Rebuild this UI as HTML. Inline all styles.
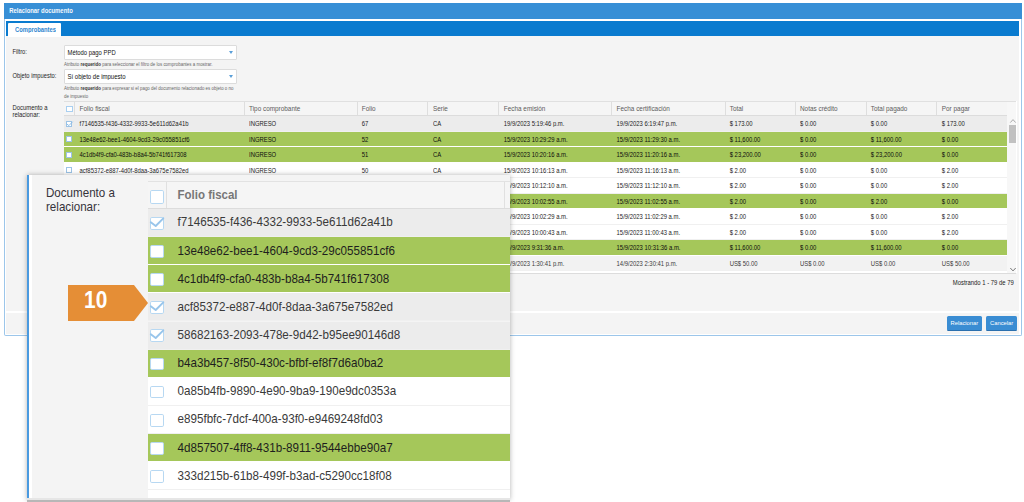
<!DOCTYPE html><html><head><meta charset="utf-8"><style>

*{box-sizing:border-box;margin:0;padding:0}
html,body{width:1024px;height:502px;overflow:hidden;background:#fff;font-family:"Liberation Sans", sans-serif;}
.a{position:absolute}
.t{position:absolute;white-space:nowrap;line-height:1;}

</style></head><body>
<div class="a" style="left:3.8px;top:3px;width:1018.6px;height:332.8px;background:#fff;border:1.4px solid #9cc6ea;border-top:none;border-radius:0 0 2px 2px"></div>
<div class="a" style="left:4px;top:3px;width:1018px;height:15.7px;background:#378fd6"></div>
<div class="t" style="left:9.3px;top:8.2px;font-size:5.9px;font-weight:bold;color:#f4f8fc;transform:scaleY(1.15);transform-origin:0 0">Relacionar documento</div>
<div class="a" style="left:6px;top:21px;width:1013px;height:15px;background:#0a7bcf"></div>
<div class="a" style="left:6px;top:36px;width:1013px;height:274.5px;background:#f4f4f4"></div>
<div class="a" style="left:8px;top:23px;width:53px;height:13.5px;background:#fff;border-radius:1px 1px 0 0"></div>
<div class="t" style="left:15px;top:26.7px;font-size:5.8px;font-weight:bold;color:#2f86cf;transform:scaleY(1.15);transform-origin:0 0">Comprobantes</div>
<div class="a" style="left:6px;top:312.5px;width:1013px;height:21px;background:#f4f4f4"></div>
<div class="t" style="left:12.5px;top:49.6px;font-size:5.75px;color:#1e1e1e;transform:scaleY(1.12);transform-origin:0 0;">Filtro:</div>
<div class="a" style="left:64px;top:45.3px;width:172.7px;height:14.6px;background:#fff;border:1px solid #dcdcdc;border-radius:1px"></div>
<div class="t" style="left:67.5px;top:50.5px;font-size:5.9px;color:#111;transform:scaleY(1.12);transform-origin:0 0;">Método pago PPD</div>
<div class="a" style="left:228.5px;top:51.3px;width:0;height:0;border-left:2.5px solid transparent;border-right:2.5px solid transparent;border-top:3px solid #5a9fd8"></div>
<div class="t" style="left:64px;top:63.2px;font-size:4.45px;color:#666">Atributo <b style="color:#333">requerido</b> para seleccionar el filtro de los comprobantes a mostrar.</div>
<div class="t" style="left:12.5px;top:74px;font-size:5.8px;color:#1e1e1e;transform:scaleY(1.12);transform-origin:0 0;">Objeto impuesto:</div>
<div class="a" style="left:64px;top:69.3px;width:172.7px;height:14.6px;background:#fff;border:1px solid #dcdcdc;border-radius:1px"></div>
<div class="t" style="left:67.5px;top:72.8px;font-size:6px;color:#111;transform:scaleY(1.12);transform-origin:0 0;">Sí objeto de impuesto</div>
<div class="a" style="left:228.5px;top:75.3px;width:0;height:0;border-left:2.5px solid transparent;border-right:2.5px solid transparent;border-top:3px solid #5a9fd8"></div>
<div class="t" style="left:64px;top:85.1px;font-size:4.45px;color:#666;line-height:7.5px;width:172px;white-space:normal">Atributo <b style="color:#333">requerido</b> para expresar si el pago del documento relacionado es objeto o no de impuesto</div>
<div class="t" style="left:12.5px;top:104.3px;font-size:5.9px;color:#1e1e1e;line-height:6.7px;transform:scaleY(1.12);transform-origin:0 0;">Documento a<br>relacionar:</div>
<div class="a" style="left:64px;top:101px;width:953px;height:172px;background:#fff"></div>
<div class="a" style="left:64px;top:101px;width:943.4px;height:15px;background:#f5f5f5;border-top:1px solid #e0e0e0;border-bottom:1px solid #dcdcdc"></div>
<div class="a" style="left:74.2px;top:102px;width:0.6px;height:13px;background:#dedede"></div>
<div class="a" style="left:244px;top:102px;width:0.6px;height:13px;background:#dedede"></div>
<div class="a" style="left:356.6px;top:102px;width:0.6px;height:13px;background:#dedede"></div>
<div class="a" style="left:427px;top:102px;width:0.6px;height:13px;background:#dedede"></div>
<div class="a" style="left:498.2px;top:102px;width:0.6px;height:13px;background:#dedede"></div>
<div class="a" style="left:610.7px;top:102px;width:0.6px;height:13px;background:#dedede"></div>
<div class="a" style="left:724.5px;top:102px;width:0.6px;height:13px;background:#dedede"></div>
<div class="a" style="left:795px;top:102px;width:0.6px;height:13px;background:#dedede"></div>
<div class="a" style="left:865.5px;top:102px;width:0.6px;height:13px;background:#dedede"></div>
<div class="a" style="left:936px;top:102px;width:0.6px;height:13px;background:#dedede"></div>
<div class="a" style="left:1007.4px;top:102px;width:0.6px;height:13px;background:#dedede"></div>
<div class="t" style="left:79.5px;top:105.6px;font-size:6.4px;color:#5c5c5c">Folio fiscal</div>
<div class="t" style="left:249px;top:105.6px;font-size:6.4px;color:#5c5c5c">Tipo comprobante</div>
<div class="t" style="left:361.8px;top:105.6px;font-size:6.4px;color:#5c5c5c">Folio</div>
<div class="t" style="left:433px;top:105.6px;font-size:6.4px;color:#5c5c5c">Serie</div>
<div class="t" style="left:503.8px;top:105.6px;font-size:6.4px;color:#5c5c5c">Fecha emisión</div>
<div class="t" style="left:616.6px;top:105.6px;font-size:6.4px;color:#5c5c5c">Fecha certificación</div>
<div class="t" style="left:729.7px;top:105.6px;font-size:6.4px;color:#5c5c5c">Total</div>
<div class="t" style="left:800px;top:105.6px;font-size:6.4px;color:#5c5c5c">Notas crédito</div>
<div class="t" style="left:870.8px;top:105.6px;font-size:6.4px;color:#5c5c5c">Total pagado</div>
<div class="t" style="left:941.8px;top:105.6px;font-size:6.4px;color:#5c5c5c">Por pagar</div>
<div class="a" style="left:66.2px;top:105.7px;width:6.4px;height:6.4px;border:0.8px solid #a9cff0;background:#fff"></div>
<div class="a" style="left:64px;top:116.0px;width:943.4px;height:15.5px;background:#ececec;border-bottom:1px solid #f0f0f0"></div>
<div class="a" style="left:66px;top:120.5px;width:6px;height:6px;border:0.7px solid #9cc3e6;background:#fff"></div>
<svg class="a" style="left:66px;top:120.5px;overflow:visible" width="8" height="8" viewBox="0 0 8 8"><path d="M0.4 2.7 L2.9 4.6 L6.7 0.7" stroke="#8cbde8" stroke-width="1" fill="none"/></svg>
<div class="t" style="left:79.5px;top:121.2px;font-size:5.9px;color:#1c1c1c;transform:scaleY(1.15);transform-origin:0 0">f7146535-f436-4332-9933-5e611d62a41b</div>
<div class="t" style="left:249px;top:121.2px;font-size:5.9px;color:#1c1c1c;transform:scaleY(1.15);transform-origin:0 0">INGRESO</div>
<div class="t" style="left:361.8px;top:121.2px;font-size:5.9px;color:#1c1c1c;transform:scaleY(1.15);transform-origin:0 0">67</div>
<div class="t" style="left:433px;top:121.2px;font-size:5.9px;color:#1c1c1c;transform:scaleY(1.15);transform-origin:0 0">CA</div>
<div class="t" style="left:503.8px;top:121.2px;font-size:5.9px;color:#1c1c1c;transform:scaleY(1.15);transform-origin:0 0">19/9/2023 5:19:46 p.m.</div>
<div class="t" style="left:616.6px;top:121.2px;font-size:5.9px;color:#1c1c1c;transform:scaleY(1.15);transform-origin:0 0">19/9/2023 6:19:47 p.m.</div>
<div class="t" style="left:729.7px;top:121.2px;font-size:5.9px;color:#1c1c1c;transform:scaleY(1.15);transform-origin:0 0">$ 173.00</div>
<div class="t" style="left:800px;top:121.2px;font-size:5.9px;color:#1c1c1c;transform:scaleY(1.15);transform-origin:0 0">$ 0.00</div>
<div class="t" style="left:870.8px;top:121.2px;font-size:5.9px;color:#1c1c1c;transform:scaleY(1.15);transform-origin:0 0">$ 0.00</div>
<div class="t" style="left:941.8px;top:121.2px;font-size:5.9px;color:#1c1c1c;transform:scaleY(1.15);transform-origin:0 0">$ 173.00</div>
<div class="a" style="left:64px;top:131.5px;width:943.4px;height:15.5px;background:#a5c75a;border-bottom:1px solid #fff"></div>
<div class="a" style="left:66px;top:136.0px;width:6px;height:6px;border:0.7px solid #9cc3e6;background:#fff"></div>
<div class="t" style="left:79.5px;top:136.7px;font-size:5.9px;color:#0d0d0d;transform:scaleY(1.15);transform-origin:0 0">13e48e62-bee1-4604-9cd3-29c055851cf6</div>
<div class="t" style="left:249px;top:136.7px;font-size:5.9px;color:#0d0d0d;transform:scaleY(1.15);transform-origin:0 0">INGRESO</div>
<div class="t" style="left:361.8px;top:136.7px;font-size:5.9px;color:#0d0d0d;transform:scaleY(1.15);transform-origin:0 0">52</div>
<div class="t" style="left:433px;top:136.7px;font-size:5.9px;color:#0d0d0d;transform:scaleY(1.15);transform-origin:0 0">CA</div>
<div class="t" style="left:503.8px;top:136.7px;font-size:5.9px;color:#0d0d0d;transform:scaleY(1.15);transform-origin:0 0">15/9/2023 10:29:29 a.m.</div>
<div class="t" style="left:616.6px;top:136.7px;font-size:5.9px;color:#0d0d0d;transform:scaleY(1.15);transform-origin:0 0">15/9/2023 11:29:30 a.m.</div>
<div class="t" style="left:729.7px;top:136.7px;font-size:5.9px;color:#0d0d0d;transform:scaleY(1.15);transform-origin:0 0">$ 11,600.00</div>
<div class="t" style="left:800px;top:136.7px;font-size:5.9px;color:#0d0d0d;transform:scaleY(1.15);transform-origin:0 0">$ 0.00</div>
<div class="t" style="left:870.8px;top:136.7px;font-size:5.9px;color:#0d0d0d;transform:scaleY(1.15);transform-origin:0 0">$ 11,600.00</div>
<div class="t" style="left:941.8px;top:136.7px;font-size:5.9px;color:#0d0d0d;transform:scaleY(1.15);transform-origin:0 0">$ 0.00</div>
<div class="a" style="left:64px;top:147.0px;width:943.4px;height:15.5px;background:#a5c75a;border-bottom:1px solid #fff"></div>
<div class="a" style="left:66px;top:151.5px;width:6px;height:6px;border:0.7px solid #9cc3e6;background:#fff"></div>
<div class="t" style="left:79.5px;top:152.2px;font-size:5.9px;color:#0d0d0d;transform:scaleY(1.15);transform-origin:0 0">4c1db4f9-cfa0-483b-b8a4-5b741f617308</div>
<div class="t" style="left:249px;top:152.2px;font-size:5.9px;color:#0d0d0d;transform:scaleY(1.15);transform-origin:0 0">INGRESO</div>
<div class="t" style="left:361.8px;top:152.2px;font-size:5.9px;color:#0d0d0d;transform:scaleY(1.15);transform-origin:0 0">51</div>
<div class="t" style="left:433px;top:152.2px;font-size:5.9px;color:#0d0d0d;transform:scaleY(1.15);transform-origin:0 0">CA</div>
<div class="t" style="left:503.8px;top:152.2px;font-size:5.9px;color:#0d0d0d;transform:scaleY(1.15);transform-origin:0 0">15/9/2023 10:20:16 a.m.</div>
<div class="t" style="left:616.6px;top:152.2px;font-size:5.9px;color:#0d0d0d;transform:scaleY(1.15);transform-origin:0 0">15/9/2023 11:20:16 a.m.</div>
<div class="t" style="left:729.7px;top:152.2px;font-size:5.9px;color:#0d0d0d;transform:scaleY(1.15);transform-origin:0 0">$ 23,200.00</div>
<div class="t" style="left:800px;top:152.2px;font-size:5.9px;color:#0d0d0d;transform:scaleY(1.15);transform-origin:0 0">$ 0.00</div>
<div class="t" style="left:870.8px;top:152.2px;font-size:5.9px;color:#0d0d0d;transform:scaleY(1.15);transform-origin:0 0">$ 23,200.00</div>
<div class="t" style="left:941.8px;top:152.2px;font-size:5.9px;color:#0d0d0d;transform:scaleY(1.15);transform-origin:0 0">$ 0.00</div>
<div class="a" style="left:64px;top:162.5px;width:943.4px;height:15.5px;background:#fff;border-bottom:1px solid #f0f0f0"></div>
<div class="a" style="left:66px;top:167.0px;width:6px;height:6px;border:0.7px solid #9cc3e6;background:#fff"></div>
<div class="t" style="left:79.5px;top:167.7px;font-size:5.9px;color:#1c1c1c;transform:scaleY(1.15);transform-origin:0 0">acf85372-e887-4d0f-8daa-3a675e7582ed</div>
<div class="t" style="left:249px;top:167.7px;font-size:5.9px;color:#1c1c1c;transform:scaleY(1.15);transform-origin:0 0">INGRESO</div>
<div class="t" style="left:361.8px;top:167.7px;font-size:5.9px;color:#1c1c1c;transform:scaleY(1.15);transform-origin:0 0">50</div>
<div class="t" style="left:433px;top:167.7px;font-size:5.9px;color:#1c1c1c;transform:scaleY(1.15);transform-origin:0 0">CA</div>
<div class="t" style="left:503.8px;top:167.7px;font-size:5.9px;color:#1c1c1c;transform:scaleY(1.15);transform-origin:0 0">15/9/2023 10:16:13 a.m.</div>
<div class="t" style="left:616.6px;top:167.7px;font-size:5.9px;color:#1c1c1c;transform:scaleY(1.15);transform-origin:0 0">15/9/2023 11:16:13 a.m.</div>
<div class="t" style="left:729.7px;top:167.7px;font-size:5.9px;color:#1c1c1c;transform:scaleY(1.15);transform-origin:0 0">$ 2.00</div>
<div class="t" style="left:800px;top:167.7px;font-size:5.9px;color:#1c1c1c;transform:scaleY(1.15);transform-origin:0 0">$ 0.00</div>
<div class="t" style="left:870.8px;top:167.7px;font-size:5.9px;color:#1c1c1c;transform:scaleY(1.15);transform-origin:0 0">$ 0.00</div>
<div class="t" style="left:941.8px;top:167.7px;font-size:5.9px;color:#1c1c1c;transform:scaleY(1.15);transform-origin:0 0">$ 2.00</div>
<div class="a" style="left:64px;top:178.0px;width:943.4px;height:15.5px;background:#fff;border-bottom:1px solid #f0f0f0"></div>
<div class="a" style="left:66px;top:182.5px;width:6px;height:6px;border:0.7px solid #9cc3e6;background:#fff"></div>
<div class="t" style="left:79.5px;top:183.2px;font-size:5.9px;color:#1c1c1c;transform:scaleY(1.15);transform-origin:0 0">58682163-2093-478e-9d42-b95ee90146d8</div>
<div class="t" style="left:249px;top:183.2px;font-size:5.9px;color:#1c1c1c;transform:scaleY(1.15);transform-origin:0 0">INGRESO</div>
<div class="t" style="left:361.8px;top:183.2px;font-size:5.9px;color:#1c1c1c;transform:scaleY(1.15);transform-origin:0 0">49</div>
<div class="t" style="left:433px;top:183.2px;font-size:5.9px;color:#1c1c1c;transform:scaleY(1.15);transform-origin:0 0">CA</div>
<div class="t" style="left:503.8px;top:183.2px;font-size:5.9px;color:#1c1c1c;transform:scaleY(1.15);transform-origin:0 0">15/9/2023 10:12:10 a.m.</div>
<div class="t" style="left:616.6px;top:183.2px;font-size:5.9px;color:#1c1c1c;transform:scaleY(1.15);transform-origin:0 0">15/9/2023 11:12:10 a.m.</div>
<div class="t" style="left:729.7px;top:183.2px;font-size:5.9px;color:#1c1c1c;transform:scaleY(1.15);transform-origin:0 0">$ 2.00</div>
<div class="t" style="left:800px;top:183.2px;font-size:5.9px;color:#1c1c1c;transform:scaleY(1.15);transform-origin:0 0">$ 0.00</div>
<div class="t" style="left:870.8px;top:183.2px;font-size:5.9px;color:#1c1c1c;transform:scaleY(1.15);transform-origin:0 0">$ 0.00</div>
<div class="t" style="left:941.8px;top:183.2px;font-size:5.9px;color:#1c1c1c;transform:scaleY(1.15);transform-origin:0 0">$ 2.00</div>
<div class="a" style="left:64px;top:193.5px;width:943.4px;height:15.5px;background:#a5c75a;border-bottom:1px solid #fff"></div>
<div class="a" style="left:66px;top:198.0px;width:6px;height:6px;border:0.7px solid #9cc3e6;background:#fff"></div>
<div class="t" style="left:79.5px;top:198.7px;font-size:5.9px;color:#0d0d0d;transform:scaleY(1.15);transform-origin:0 0">b4a3b457-8f50-430c-bfbf-ef8f7d6a0ba2</div>
<div class="t" style="left:249px;top:198.7px;font-size:5.9px;color:#0d0d0d;transform:scaleY(1.15);transform-origin:0 0">INGRESO</div>
<div class="t" style="left:361.8px;top:198.7px;font-size:5.9px;color:#0d0d0d;transform:scaleY(1.15);transform-origin:0 0">48</div>
<div class="t" style="left:433px;top:198.7px;font-size:5.9px;color:#0d0d0d;transform:scaleY(1.15);transform-origin:0 0">CA</div>
<div class="t" style="left:503.8px;top:198.7px;font-size:5.9px;color:#0d0d0d;transform:scaleY(1.15);transform-origin:0 0">15/9/2023 10:02:55 a.m.</div>
<div class="t" style="left:616.6px;top:198.7px;font-size:5.9px;color:#0d0d0d;transform:scaleY(1.15);transform-origin:0 0">15/9/2023 11:02:55 a.m.</div>
<div class="t" style="left:729.7px;top:198.7px;font-size:5.9px;color:#0d0d0d;transform:scaleY(1.15);transform-origin:0 0">$ 2.00</div>
<div class="t" style="left:800px;top:198.7px;font-size:5.9px;color:#0d0d0d;transform:scaleY(1.15);transform-origin:0 0">$ 0.00</div>
<div class="t" style="left:870.8px;top:198.7px;font-size:5.9px;color:#0d0d0d;transform:scaleY(1.15);transform-origin:0 0">$ 2.00</div>
<div class="t" style="left:941.8px;top:198.7px;font-size:5.9px;color:#0d0d0d;transform:scaleY(1.15);transform-origin:0 0">$ 0.00</div>
<div class="a" style="left:64px;top:209.0px;width:943.4px;height:15.5px;background:#fff;border-bottom:1px solid #f0f0f0"></div>
<div class="a" style="left:66px;top:213.5px;width:6px;height:6px;border:0.7px solid #9cc3e6;background:#fff"></div>
<div class="t" style="left:79.5px;top:214.2px;font-size:5.9px;color:#1c1c1c;transform:scaleY(1.15);transform-origin:0 0">0a85b4fb-9890-4e90-9ba9-190e9dc0353a</div>
<div class="t" style="left:249px;top:214.2px;font-size:5.9px;color:#1c1c1c;transform:scaleY(1.15);transform-origin:0 0">INGRESO</div>
<div class="t" style="left:361.8px;top:214.2px;font-size:5.9px;color:#1c1c1c;transform:scaleY(1.15);transform-origin:0 0">47</div>
<div class="t" style="left:433px;top:214.2px;font-size:5.9px;color:#1c1c1c;transform:scaleY(1.15);transform-origin:0 0">CA</div>
<div class="t" style="left:503.8px;top:214.2px;font-size:5.9px;color:#1c1c1c;transform:scaleY(1.15);transform-origin:0 0">15/9/2023 10:02:29 a.m.</div>
<div class="t" style="left:616.6px;top:214.2px;font-size:5.9px;color:#1c1c1c;transform:scaleY(1.15);transform-origin:0 0">15/9/2023 11:02:29 a.m.</div>
<div class="t" style="left:729.7px;top:214.2px;font-size:5.9px;color:#1c1c1c;transform:scaleY(1.15);transform-origin:0 0">$ 2.00</div>
<div class="t" style="left:800px;top:214.2px;font-size:5.9px;color:#1c1c1c;transform:scaleY(1.15);transform-origin:0 0">$ 0.00</div>
<div class="t" style="left:870.8px;top:214.2px;font-size:5.9px;color:#1c1c1c;transform:scaleY(1.15);transform-origin:0 0">$ 0.00</div>
<div class="t" style="left:941.8px;top:214.2px;font-size:5.9px;color:#1c1c1c;transform:scaleY(1.15);transform-origin:0 0">$ 2.00</div>
<div class="a" style="left:64px;top:224.5px;width:943.4px;height:15.5px;background:#fff;border-bottom:1px solid #f0f0f0"></div>
<div class="a" style="left:66px;top:229.0px;width:6px;height:6px;border:0.7px solid #9cc3e6;background:#fff"></div>
<div class="t" style="left:79.5px;top:229.7px;font-size:5.9px;color:#1c1c1c;transform:scaleY(1.15);transform-origin:0 0">e895fbfc-7dcf-400a-93f0-e9469248fd03</div>
<div class="t" style="left:249px;top:229.7px;font-size:5.9px;color:#1c1c1c;transform:scaleY(1.15);transform-origin:0 0">INGRESO</div>
<div class="t" style="left:361.8px;top:229.7px;font-size:5.9px;color:#1c1c1c;transform:scaleY(1.15);transform-origin:0 0">46</div>
<div class="t" style="left:433px;top:229.7px;font-size:5.9px;color:#1c1c1c;transform:scaleY(1.15);transform-origin:0 0">CA</div>
<div class="t" style="left:503.8px;top:229.7px;font-size:5.9px;color:#1c1c1c;transform:scaleY(1.15);transform-origin:0 0">15/9/2023 10:00:43 a.m.</div>
<div class="t" style="left:616.6px;top:229.7px;font-size:5.9px;color:#1c1c1c;transform:scaleY(1.15);transform-origin:0 0">15/9/2023 11:00:43 a.m.</div>
<div class="t" style="left:729.7px;top:229.7px;font-size:5.9px;color:#1c1c1c;transform:scaleY(1.15);transform-origin:0 0">$ 2.00</div>
<div class="t" style="left:800px;top:229.7px;font-size:5.9px;color:#1c1c1c;transform:scaleY(1.15);transform-origin:0 0">$ 0.00</div>
<div class="t" style="left:870.8px;top:229.7px;font-size:5.9px;color:#1c1c1c;transform:scaleY(1.15);transform-origin:0 0">$ 0.00</div>
<div class="t" style="left:941.8px;top:229.7px;font-size:5.9px;color:#1c1c1c;transform:scaleY(1.15);transform-origin:0 0">$ 2.00</div>
<div class="a" style="left:64px;top:240.0px;width:943.4px;height:15.5px;background:#a5c75a;border-bottom:1px solid #fff"></div>
<div class="a" style="left:66px;top:244.5px;width:6px;height:6px;border:0.7px solid #9cc3e6;background:#fff"></div>
<div class="t" style="left:79.5px;top:245.2px;font-size:5.9px;color:#0d0d0d;transform:scaleY(1.15);transform-origin:0 0">4d857507-4ff8-431b-8911-9544ebbe90a7</div>
<div class="t" style="left:249px;top:245.2px;font-size:5.9px;color:#0d0d0d;transform:scaleY(1.15);transform-origin:0 0">INGRESO</div>
<div class="t" style="left:361.8px;top:245.2px;font-size:5.9px;color:#0d0d0d;transform:scaleY(1.15);transform-origin:0 0">45</div>
<div class="t" style="left:433px;top:245.2px;font-size:5.9px;color:#0d0d0d;transform:scaleY(1.15);transform-origin:0 0">CA</div>
<div class="t" style="left:503.8px;top:245.2px;font-size:5.9px;color:#0d0d0d;transform:scaleY(1.15);transform-origin:0 0">15/9/2023 9:31:36 a.m.</div>
<div class="t" style="left:616.6px;top:245.2px;font-size:5.9px;color:#0d0d0d;transform:scaleY(1.15);transform-origin:0 0">15/9/2023 10:31:36 a.m.</div>
<div class="t" style="left:729.7px;top:245.2px;font-size:5.9px;color:#0d0d0d;transform:scaleY(1.15);transform-origin:0 0">$ 11,600.00</div>
<div class="t" style="left:800px;top:245.2px;font-size:5.9px;color:#0d0d0d;transform:scaleY(1.15);transform-origin:0 0">$ 0.00</div>
<div class="t" style="left:870.8px;top:245.2px;font-size:5.9px;color:#0d0d0d;transform:scaleY(1.15);transform-origin:0 0">$ 11,600.00</div>
<div class="t" style="left:941.8px;top:245.2px;font-size:5.9px;color:#0d0d0d;transform:scaleY(1.15);transform-origin:0 0">$ 0.00</div>
<div class="a" style="left:64px;top:255.5px;width:943.4px;height:15.5px;background:#f2f2f2;border-bottom:1px solid #f0f0f0"></div>
<div class="a" style="left:66px;top:260.0px;width:6px;height:6px;border:0.7px solid #9cc3e6;background:#fff"></div>
<div class="t" style="left:79.5px;top:260.7px;font-size:5.9px;color:#3a3a3a;transform:scaleY(1.15);transform-origin:0 0">333d215b-61b8-499f-b3ad-c5290cc18f08</div>
<div class="t" style="left:249px;top:260.7px;font-size:5.9px;color:#3a3a3a;transform:scaleY(1.15);transform-origin:0 0">INGRESO</div>
<div class="t" style="left:361.8px;top:260.7px;font-size:5.9px;color:#3a3a3a;transform:scaleY(1.15);transform-origin:0 0">44</div>
<div class="t" style="left:433px;top:260.7px;font-size:5.9px;color:#3a3a3a;transform:scaleY(1.15);transform-origin:0 0">CA</div>
<div class="t" style="left:503.8px;top:260.7px;font-size:5.9px;color:#3a3a3a;transform:scaleY(1.15);transform-origin:0 0">14/9/2023 1:30:41 p.m.</div>
<div class="t" style="left:616.6px;top:260.7px;font-size:5.9px;color:#3a3a3a;transform:scaleY(1.15);transform-origin:0 0">14/9/2023 2:30:41 p.m.</div>
<div class="t" style="left:729.7px;top:260.7px;font-size:5.9px;color:#3a3a3a;transform:scaleY(1.15);transform-origin:0 0">US$ 50.00</div>
<div class="t" style="left:800px;top:260.7px;font-size:5.9px;color:#3a3a3a;transform:scaleY(1.15);transform-origin:0 0">US$ 0.00</div>
<div class="t" style="left:870.8px;top:260.7px;font-size:5.9px;color:#3a3a3a;transform:scaleY(1.15);transform-origin:0 0">US$ 0.00</div>
<div class="t" style="left:941.8px;top:260.7px;font-size:5.9px;color:#3a3a3a;transform:scaleY(1.15);transform-origin:0 0">US$ 50.00</div>
<div class="a" style="left:64px;top:272.5px;width:943.4px;height:0.8px;background:#dcdcdc"></div>
<div class="a" style="left:1007.4px;top:101px;width:9px;height:172.5px;background:#f7f7f7;border-top:1px solid #e0e0e0;border-bottom:0.8px solid #dcdcdc"></div>
<div class="a" style="left:1008.6px;top:125.1px;width:7.4px;height:17.5px;background:#c1c1c1"></div>
<svg class="a" style="left:1008.5px;top:116.5px" width="8" height="7" viewBox="0 0 8 7"><path d="M1.3 5.6 L4 2.6 L6.7 5.6" stroke="#a0a0a0" stroke-width="0.9" fill="none"/></svg>
<svg class="a" style="left:1008.5px;top:265.5px" width="8" height="7" viewBox="0 0 8 7"><path d="M1.3 2 L4 4.9 L6.7 2" stroke="#777" stroke-width="1" fill="none"/></svg>
<div class="t" style="left:952.8px;top:280.3px;font-size:5.9px;color:#1a1a1a;transform:scaleY(1.15);transform-origin:0 0">Mostrando 1 - 79 de 79</div>
<div class="a" style="left:946.8px;top:315.7px;width:35.2px;height:15px;background:#3a8dd3;border-radius:1.5px;border-bottom:1px solid #2a6fae"></div>
<div class="t" style="left:950.5px;top:320.6px;font-size:5.8px;color:#fff">Relacionar</div>
<div class="a" style="left:986px;top:315.7px;width:31.3px;height:15px;background:#3a8dd3;border-radius:1.5px;border-bottom:1px solid #2a6fae"></div>
<div class="t" style="left:990px;top:320.6px;font-size:5.8px;color:#fff">Cancelar</div>
<div class="a" style="left:27px;top:175.4px;width:483px;height:324.5px;background:#f4f4f4;border-left:2.4px solid #4a9ae0;box-shadow:0 0 5px rgba(0,0,0,0.3)"></div>
<div class="a" style="left:29.3px;top:175.4px;width:3px;height:324.5px;background:#fff"></div>
<div class="t" style="left:46px;top:186.3px;font-size:11.6px;color:#35323a;line-height:12.5px;transform:scaleY(1.1);transform-origin:0 0">Documento a<br>relacionar:</div>
<div class="a" style="left:147.5px;top:181.4px;width:362.5px;height:27.5px;background:#f5f5f5;border-top:1px solid #e2e2e2;border-bottom:1px solid #dcdcdc"></div>
<div class="a" style="left:165.9px;top:182.4px;width:1.5px;height:25.5px;background:#e0e0e0"></div>
<div class="a" style="left:504px;top:182.4px;width:1px;height:25.5px;background:#e0e0e0"></div>
<div class="t" style="left:177.5px;top:189.1px;font-size:11.5px;font-weight:bold;color:#777;transform:scaleY(1.09);transform-origin:0 0">Folio fiscal</div>
<div class="a" style="left:150.2px;top:190.1px;width:13.5px;height:13.5px;border:1.6px solid #b7d8f2;border-radius:1.8px;background:#fff"></div>
<div class="a" style="left:147.5px;top:208.9px;width:362.5px;height:28.15px;background:#ececec;border-bottom:1.75px solid #f0f0f0"></div>
<div class="a" style="left:150.3px;top:216.8px;width:13.3px;height:12.8px;border:1.6px solid #b7d8f2;border-radius:1.8px;background:#fff"></div>
<svg class="a" style="left:150.3px;top:216.8px;overflow:visible" width="16" height="16" viewBox="0 0 16 16"><path d="M0.8 5.3 L5.7 9 L13.3 1.3" stroke="#98c5eb" stroke-width="1.9" fill="none" stroke-linejoin="round" stroke-linecap="round"/></svg>
<div class="t" style="left:177.5px;top:215.4px;font-size:11.65px;transform:scaleY(1.1);transform-origin:0 0;color:#3a3a3a">f7146535-f436-4332-9933-5e611d62a41b</div>
<div class="a" style="left:147.5px;top:237.05px;width:362.5px;height:28.15px;background:#a5c75a;border-bottom:1.75px solid #fff"></div>
<div class="a" style="left:150.3px;top:244.95000000000002px;width:13.3px;height:12.8px;border:1.6px solid #b7d8f2;border-radius:1.8px;background:#fff"></div>
<div class="t" style="left:177.5px;top:243.55px;font-size:11.65px;transform:scaleY(1.1);transform-origin:0 0;color:#1e1e1e">13e48e62-bee1-4604-9cd3-29c055851cf6</div>
<div class="a" style="left:147.5px;top:265.2px;width:362.5px;height:28.15px;background:#a5c75a;border-bottom:1.75px solid #fff"></div>
<div class="a" style="left:150.3px;top:273.09999999999997px;width:13.3px;height:12.8px;border:1.6px solid #b7d8f2;border-radius:1.8px;background:#fff"></div>
<div class="t" style="left:177.5px;top:271.7px;font-size:11.65px;transform:scaleY(1.1);transform-origin:0 0;color:#1e1e1e">4c1db4f9-cfa0-483b-b8a4-5b741f617308</div>
<div class="a" style="left:147.5px;top:293.35px;width:362.5px;height:28.15px;background:#ececec;border-bottom:1.75px solid #f0f0f0"></div>
<div class="a" style="left:150.3px;top:301.25px;width:13.3px;height:12.8px;border:1.6px solid #b7d8f2;border-radius:1.8px;background:#fff"></div>
<svg class="a" style="left:150.3px;top:301.25px;overflow:visible" width="16" height="16" viewBox="0 0 16 16"><path d="M0.8 5.3 L5.7 9 L13.3 1.3" stroke="#98c5eb" stroke-width="1.9" fill="none" stroke-linejoin="round" stroke-linecap="round"/></svg>
<div class="t" style="left:177.5px;top:299.85px;font-size:11.65px;transform:scaleY(1.1);transform-origin:0 0;color:#3a3a3a">acf85372-e887-4d0f-8daa-3a675e7582ed</div>
<div class="a" style="left:147.5px;top:321.5px;width:362.5px;height:28.15px;background:#ececec;border-bottom:1.75px solid #f0f0f0"></div>
<div class="a" style="left:150.3px;top:329.4px;width:13.3px;height:12.8px;border:1.6px solid #b7d8f2;border-radius:1.8px;background:#fff"></div>
<svg class="a" style="left:150.3px;top:329.4px;overflow:visible" width="16" height="16" viewBox="0 0 16 16"><path d="M0.8 5.3 L5.7 9 L13.3 1.3" stroke="#98c5eb" stroke-width="1.9" fill="none" stroke-linejoin="round" stroke-linecap="round"/></svg>
<div class="t" style="left:177.5px;top:328.0px;font-size:11.65px;transform:scaleY(1.1);transform-origin:0 0;color:#3a3a3a">58682163-2093-478e-9d42-b95ee90146d8</div>
<div class="a" style="left:147.5px;top:349.65px;width:362.5px;height:28.15px;background:#a5c75a;border-bottom:1.75px solid #fff"></div>
<div class="a" style="left:150.3px;top:357.54999999999995px;width:13.3px;height:12.8px;border:1.6px solid #b7d8f2;border-radius:1.8px;background:#fff"></div>
<div class="t" style="left:177.5px;top:356.15px;font-size:11.65px;transform:scaleY(1.1);transform-origin:0 0;color:#1e1e1e">b4a3b457-8f50-430c-bfbf-ef8f7d6a0ba2</div>
<div class="a" style="left:147.5px;top:377.79999999999995px;width:362.5px;height:28.15px;background:#fff;border-bottom:1.75px solid #f0f0f0"></div>
<div class="a" style="left:150.3px;top:385.69999999999993px;width:13.3px;height:12.8px;border:1.6px solid #b7d8f2;border-radius:1.8px;background:#fff"></div>
<div class="t" style="left:177.5px;top:384.29999999999995px;font-size:11.65px;transform:scaleY(1.1);transform-origin:0 0;color:#3a3a3a">0a85b4fb-9890-4e90-9ba9-190e9dc0353a</div>
<div class="a" style="left:147.5px;top:405.95px;width:362.5px;height:28.15px;background:#fff;border-bottom:1.75px solid #f0f0f0"></div>
<div class="a" style="left:150.3px;top:413.84999999999997px;width:13.3px;height:12.8px;border:1.6px solid #b7d8f2;border-radius:1.8px;background:#fff"></div>
<div class="t" style="left:177.5px;top:412.45px;font-size:11.65px;transform:scaleY(1.1);transform-origin:0 0;color:#3a3a3a">e895fbfc-7dcf-400a-93f0-e9469248fd03</div>
<div class="a" style="left:147.5px;top:434.1px;width:362.5px;height:28.15px;background:#a5c75a;border-bottom:1.75px solid #fff"></div>
<div class="a" style="left:150.3px;top:442.0px;width:13.3px;height:12.8px;border:1.6px solid #b7d8f2;border-radius:1.8px;background:#fff"></div>
<div class="t" style="left:177.5px;top:440.6px;font-size:11.65px;transform:scaleY(1.1);transform-origin:0 0;color:#1e1e1e">4d857507-4ff8-431b-8911-9544ebbe90a7</div>
<div class="a" style="left:147.5px;top:462.25px;width:362.5px;height:28.15px;background:#fff;border-bottom:1.75px solid #f0f0f0"></div>
<div class="a" style="left:150.3px;top:470.15px;width:13.3px;height:12.8px;border:1.6px solid #b7d8f2;border-radius:1.8px;background:#fff"></div>
<div class="t" style="left:177.5px;top:468.75px;font-size:11.65px;transform:scaleY(1.1);transform-origin:0 0;color:#3a3a3a">333d215b-61b8-499f-b3ad-c5290cc18f08</div>
<div class="a" style="left:147.5px;top:490.4px;width:362.5px;height:9.5px;background:#fff;border-bottom:1.75px solid #f0f0f0"></div>
<div class="a" style="left:27px;top:497.6px;width:483px;height:2.3px;background:#e6e6e6"></div>
<div class="a" style="left:27px;top:499.9px;width:483px;height:2.1px;background:#b7b7b7"></div>
<svg class="a" style="left:68px;top:284.6px" width="81" height="36" viewBox="0 0 81 36"><path d="M0 0 H66 L80 18 L66 36 H0 Z" fill="#e58e36"/></svg>
<div class="t" style="left:84px;top:289.3px;font-size:22.5px;font-weight:bold;color:#fff;transform:scale(0.93,1.05);transform-origin:0 0">10</div>
</body></html>
